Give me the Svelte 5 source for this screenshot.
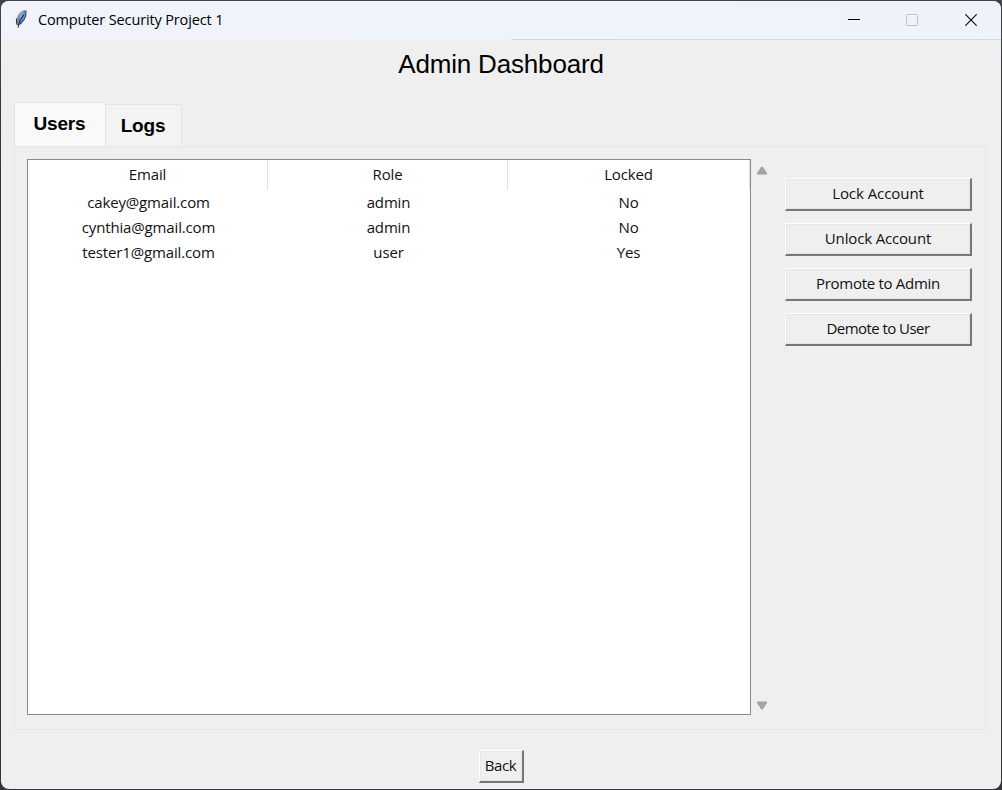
<script>
  const columns = ['Email', 'Role', 'Locked'];
  const users = [
    ['cakey@gmail.com', 'admin', 'No'],
    ['cynthia@gmail.com', 'admin', 'No'],
    ['tester1@gmail.com', 'user', 'Yes']
  ];
  const actions = [
    { label: 'Lock Account', tracking: -0.06 },
    { label: 'Unlock Account', tracking: -0.16 },
    { label: 'Promote to Admin', tracking: -0.29 },
    { label: 'Demote to User', tracking: -0.56 }
  ];
</script>

<div class="desktop">
  <div class="window">
    <header class="titlebar">
      <svg class="feather" width="14" height="20" viewBox="0 0 14 20">
        <path d="M11.500 .8C8 1 4.500 4 3 8C2 11 1.500 14 3.500 16L4 19L5.500 16C9 14 11 10 11.500 6Z" fill="#a5a29c" />
        <path d="M11 1.500C8 3 5 6 4 10L3.500 14L6 14.500C9 12 10.500 8 11 1.500Z" fill="#407fc9" />
        <path d="M9.500 2.500L6 8L7.500 6.500L5 12" fill="none" stroke="#79b1ed" stroke-width="1.500" />
        <path d="M12 1.500L11.800 6C11 10 9 13 5.500 15.500M9.500 6L6 11L4 18.500M2.800 9.500L2.300 13L3.300 16" fill="none" stroke="#25272b" stroke-width="1" />
      </svg>
      <span class="caption">Computer Security Project 1</span>
      <div class="controls">
        <svg width="12" height="12" viewBox="0 0 12 12"><path d="M0 5.500H12" stroke="#000" /></svg>
        <svg width="12" height="12" viewBox="0 0 12 12"><rect x=".5" y=".5" width="11" height="11" rx="1" fill="none" stroke="#bfc2c6" /></svg>
        <svg width="12" height="12" viewBox="0 0 12 12"><path d="M.3 .3L11.700 11.700M11.700 .3L.3 11.700" stroke="#111" stroke-width="1.200" /></svg>
      </div>
    </header>

    <h1>Admin Dashboard</h1>

    <main>
      <nav>
        <div class="tab active"><span>Users</span></div>
        <div class="tab"><span>Logs</span></div>
      </nav>
      <section class="pane">
        <div class="tree">
          <div class="row head">
            {#each columns as column}<div class="cell">{column}</div>{/each}
          </div>
          {#each users as user}
            <div class="row">
              {#each user as value}<div class="cell">{value}</div>{/each}
            </div>
          {/each}
        </div>
        <div class="scrollbar">
          <svg width="12" height="9" viewBox="0 0 12 9"><path d="M5 1Q6 0 7 1L11 7Q11.500 8.500 10 8.500H2Q.5 8.500 1 7Z" fill="#a3a3a3" /></svg>
          <svg width="12" height="9" viewBox="0 0 12 9"><path d="M5 8Q6 9 7 8L11 2Q11.500 .5 10 .5H2Q.5 .5 1 2Z" fill="#a3a3a3" /></svg>
        </div>
        <div class="actions">
          {#each actions as action}
            <button style="letter-spacing: {action.tracking}px">{action.label}</button>
          {/each}
        </div>
      </section>
    </main>

    <footer><button class="back">Back</button></footer>
  </div>
</div>

<style>
  :global(body) { margin: 0; }
  * { box-sizing: border-box; }
  .desktop {
    width: 1002px;
    height: 790px;
    padding: 1px;
    background: linear-gradient(#43414d, #36343e 20%, #34343a);
    font-family: "Open Sans", sans-serif;
    font-size: 15px;
    letter-spacing: -0.15px;
    color: #111;
    overflow: hidden;
  }
  .window {
    width: 1000px;
    height: 788px;
    display: flex;
    flex-direction: column;
    background: #efefef;
    border-radius: 8px;
    overflow: hidden;
  }
  .titlebar {
    height: 39px;
    flex: none;
    display: flex;
    align-items: center;
    padding: 0 24px 0 13px;
    background: linear-gradient(90deg, #f0f3fb, #eef3f9);
    border-bottom: 1px solid;
    border-image: linear-gradient(90deg, #eff2f9 51%, #d5d8db 51%) 1;
  }
  .feather { margin-top: -3px; }
  .caption { margin: -2px 0 0 10px; color: #000; font-size: 14.5px; letter-spacing: -0.14px; }
  .controls { display: flex; gap: 47px; margin-left: auto; }
  .controls svg:first-child { margin-right: -1px; }
  h1 {
    margin: 0;
    height: 62px;
    text-align: center;
    font: 400 26px/48px "Liberation Sans", Arial, sans-serif;
    letter-spacing: -0.18px;
    color: #000;
  }
  main { padding: 0 15px 0 13px; }
  nav {
    height: 44px;
    display: flex;
    align-items: flex-end;
    font: 700 19px "Liberation Sans", Arial, sans-serif;
    letter-spacing: -0.2px;
    color: #000;
  }
  .tab {
    height: 42px;
    width: 76px;
    display: flex;
    align-items: center;
    justify-content: center;
    padding-right: 1px;
    background: #f3f3f3;
    border: 1px solid #e4e4e4;
    border-left: 0;
    border-bottom: 0;
  }
  .tab.active { width: 92px; height: 44px; padding-bottom: 1px; background: #f9f9f9; border-left: 1px solid #e4e4e4; }
  .pane {
    height: 584px;
    display: flex;
    padding: 12px;
    border: 1px solid #e5e5e5;
  }
  .tree { width: 724px; height: 556px; background: #fff; border: 1px solid #868b96; }
  .row { height: 25px; display: grid; grid-template-columns: 240px 240px 242px; }
  .cell { display: flex; align-items: center; justify-content: center; }
  .row:not(.head) .cell { padding-left: 1px; padding-bottom: 1px; }
  .row:not(.head) .cell:last-child { padding: 0 1px 1px 0; }
  .head { height: 30px; }
  .head .cell { border-right: 1px solid #e1e1e1; padding-bottom: 2px; }
  .scrollbar {
    width: 23px;
    height: 556px;
    padding: 7px 1px 5px 0;
    display: flex;
    flex-direction: column;
    align-items: center;
    justify-content: space-between;
  }
  .actions { display: flex; flex-direction: column; gap: 12px; margin: 19px 0 0 11px; width: 187px; }
  button {
    height: 33px;
    width: 100%;
    padding: 0 0 2px;
    font: 15px "Open Sans", sans-serif;
    color: #111;
    background: #efefef;
    border: solid;
    border-width: 1px 2px 2px 1px;
    border-color: #fff #777 #777 #fff;
    box-shadow: inset 1px 1px #e6e6e6, inset -1px -1px #e3e3e3;
  }
  footer { display: flex; justify-content: center; padding-top: 20px; }
  .back { width: 45px; letter-spacing: -0.4px; }
</style>
